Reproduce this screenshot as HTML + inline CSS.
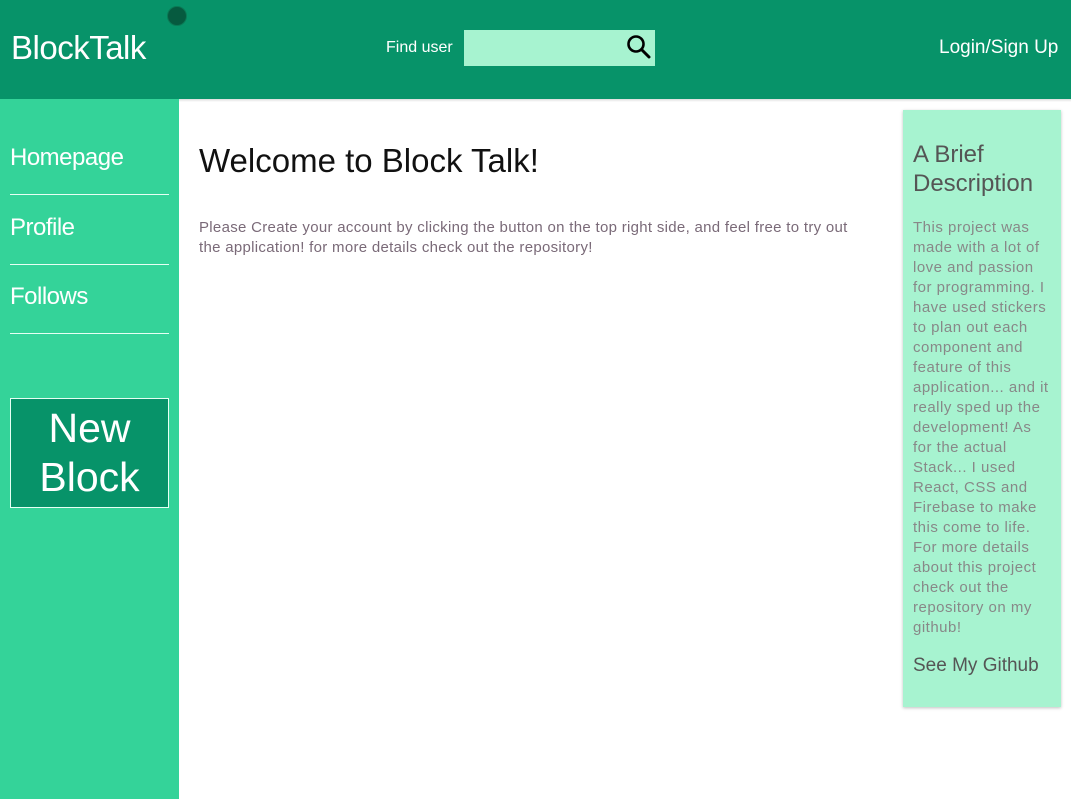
<!DOCTYPE html>
<html><head><style>
*{margin:0;padding:0;box-sizing:border-box}
body{width:1071px;height:799px;overflow:hidden;background:#fff;font-family:"Liberation Sans",sans-serif;position:relative}
.hdr{position:absolute;left:0;top:0;width:1071px;height:99px;background:#079369}
.logo{position:absolute;left:11px;top:29px;font-size:33px;color:#fff;letter-spacing:-0.5px}
.dot{position:absolute;left:167px;top:6px;width:20px;height:20px;border-radius:50%;background:#065a3f;border:1px solid #0a7a55}
.find{position:absolute;left:386px;top:39px;font-size:16px;color:#fff}
.search{position:absolute;left:464px;top:30px;width:191px;height:36px;background:#a7f3d0}
.login{position:absolute;left:939px;top:37px;font-size:19px;color:#fff}
.line{position:absolute;left:179px;top:99px;width:892px;height:3px;background:linear-gradient(#ddd,#fff)}
.side{position:absolute;left:0;top:99px;width:179px;height:700px;background:#34d399}
.nav{position:absolute;left:10px;width:159px;font-size:24px;color:#fff;border-bottom:1px solid #e6fff4;letter-spacing:-0.5px}
.nb{position:absolute;left:10px;top:299px;width:159px;height:110px;background:#079369;border:1px solid #e6fff4;color:#fff;font-size:41px;text-align:center;line-height:49px;padding-top:5px;font-weight:300}
h1{position:absolute;left:199px;top:142px;font-size:33px;font-weight:normal;color:#111}
.p{position:absolute;left:199px;top:218px;width:672px;font-size:15px;line-height:20px;color:#7a6a78;letter-spacing:0.3px}
.card{position:absolute;left:903px;top:110px;width:158px;height:597px;background:#a7f3d0;box-shadow:0 1px 3px rgba(0,0,0,.25);padding:30px 6px 0 10px;color:#555}
.card h2{font-size:24px;font-weight:normal;line-height:29px;color:#555}
.card .d{font-size:15px;line-height:20px;color:#888;margin-top:20px;letter-spacing:0.5px}
.card .g{font-size:19px;margin-top:17px;color:#555}
</style></head><body>
<div class="hdr">
<div class="logo">BlockTalk</div>
<div class="dot"></div>
<div class="find">Find user</div>
<div class="search"><svg style="position:absolute;left:161px;top:3px" width="28" height="28" viewBox="0 0 28 28"><circle cx="11" cy="11" r="7.5" fill="none" stroke="#000" stroke-width="2.6"/><path d="M16.5 16.5L24 24" stroke="#000" stroke-width="3" stroke-linecap="round"/></svg></div>
<div class="login">Login/Sign Up</div>
</div>
<div class="line"></div>
<div class="side">
<div class="nav" style="top:45px;height:51px">Homepage</div>
<div class="nav" style="top:115px;height:51px">Profile</div>
<div class="nav" style="top:184px;height:51px">Follows</div>
<div class="nb">New<br>Block</div>
</div>
<h1>Welcome to Block Talk!</h1>
<div class="p">Please Create your account by clicking the button on the top right side, and feel free to try out the application! for more details check out the repository!</div>
<div class="card">
<h2>A Brief Description</h2>
<div class="d">This project was made with a lot of love and passion for programming. I have used stickers to plan out each component and feature of this application... and it really sped up the development! As for the actual Stack... I used React, CSS and Firebase to make this come to life. For more details about this project check out the repository on my github!</div>
<div class="g">See My Github</div>
</div>
</body></html>
